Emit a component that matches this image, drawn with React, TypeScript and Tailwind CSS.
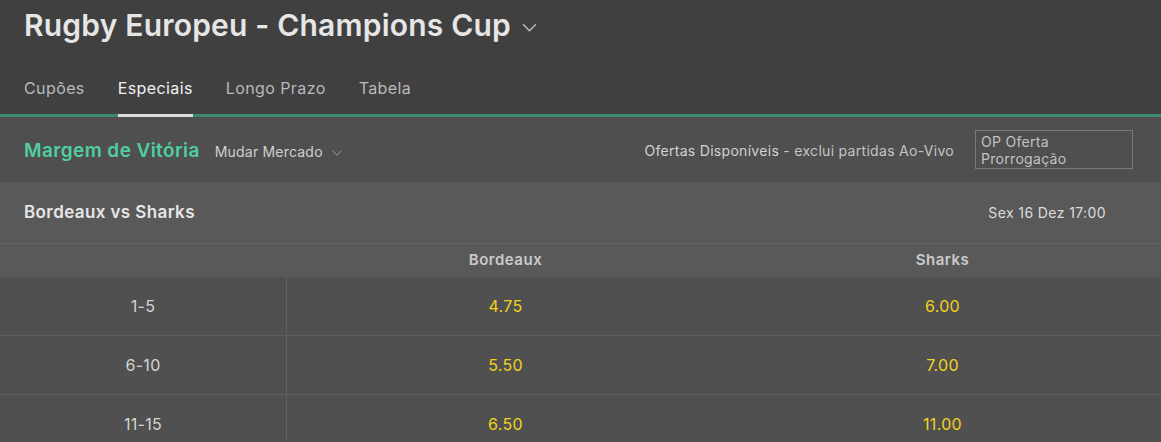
import React from "react";

const TABS = ["Cupões", "Especiais", "Longo Prazo", "Tabela"];

const ROWS = [
  { label: "1-5", home: "4.75", away: "6.00" },
  { label: "6-10", home: "5.50", away: "7.00" },
  { label: "11-15", home: "6.50", away: "11.00" },
];

function Chevron({ w, h, className }: { w: number; h: number; className?: string }) {
  return (
    <svg width={w} height={h} viewBox="0 0 14 8" fill="none" className={className}>
      <polyline points="1,1 7,7 13,1" stroke="currentColor" strokeWidth="1.3" />
    </svg>
  );
}

export default function App() {
  return (
    <div className="min-h-[442px] overflow-hidden bg-[#505050] font-['Inter','Liberation_Sans',sans-serif] antialiased">
      {/* Header */}
      <div className="bg-[#404040] pt-2">
        <div className="flex items-center gap-[11px] px-6">
          <h1 className="text-[30px] font-semibold leading-[34px] tracking-[0.2px] text-[#e6e6e6]">
            Rugby Europeu - Champions Cup
          </h1>
          <Chevron w={15} h={9} className="mt-1 text-[#bdbdbd]" />
        </div>
        <div className="flex gap-[33px] border-b-[3px] border-[#3a8a6b] px-6 pt-[36px] tracking-[0.4px]">
          {TABS.map((t) => (
            <div
              key={t}
              className={
                t === "Especiais"
                  ? "-mb-[3px] border-b-[3px] border-[#dcdcdc] pb-4 text-[16px] leading-5 text-[#f0f0f0]"
                  : "pb-4 text-[16px] leading-5 text-[#b9b9b9]"
              }
            >
              {t}
            </div>
          ))}
        </div>
      </div>

      {/* Market row */}
      <div className="flex h-[65px] items-center bg-[#4f4f4f] pl-6 pr-[28px]">
        <span className="mt-1 text-[19px] font-semibold tracking-[0.4px] text-[#4fcf9f]">Margem de Vitória</span>
        <span className="ml-[15px] mt-1 text-[14px] tracking-[0.2px] text-[#cfcfcf]">Mudar Mercado</span>
        <Chevron w={10} h={6} className="ml-[9px] mt-[6px] text-[#a9a9a9]" />
        <div className="flex-1" />
        <span className="mt-[2px] text-[14px] tracking-[0.3px] text-[#d2d2d2]">
          Ofertas Disponíveis <span className="text-[#c4c4c4]">- exclui partidas Ao-Vivo</span>
        </span>
        <div className="ml-[21px] h-[39px] w-[158px] border border-[#7a7a7a] px-[5px] pt-[2px] text-[14px] leading-[17px] tracking-[0.3px] text-[#c2c2c2]">
          OP Oferta
          <br />
          Prorrogação
        </div>
      </div>

      {/* Event row */}
      <div className="flex h-[62px] items-center justify-between border-b border-[#646464] bg-[#595959] pl-6 pr-[55px]">
        <span className="text-[17px] font-semibold tracking-[0.4px] text-[#e6e6e6]">Bordeaux vs Sharks</span>
        <span className="text-[14px] tracking-[0.4px] text-[#dcdcdc]">Sex 16 Dez 17:00</span>
      </div>

      {/* Table */}
      <div className="grid h-[33px] grid-cols-[287px_1fr_1fr] items-center bg-[#595959] text-[15px] font-semibold tracking-[0.5px] text-[#cacaca]">
        <div />
        <div className="text-center">Bordeaux</div>
        <div className="text-center">Sharks</div>
      </div>
      {ROWS.map((r) => (
        <div
          key={r.label}
          className="grid h-[59px] grid-cols-[287px_1fr_1fr] border-b border-[#606060] bg-[#505050] text-[16px] tracking-[0.3px]"
        >
          <div className="flex items-center justify-center border-r border-[#606060] text-[#d4d4d4]">{r.label}</div>
          <div className="flex items-center justify-center text-[#f2d31b]">{r.home}</div>
          <div className="flex items-center justify-center text-[#f2d31b]">{r.away}</div>
        </div>
      ))}
    </div>
  );
}
